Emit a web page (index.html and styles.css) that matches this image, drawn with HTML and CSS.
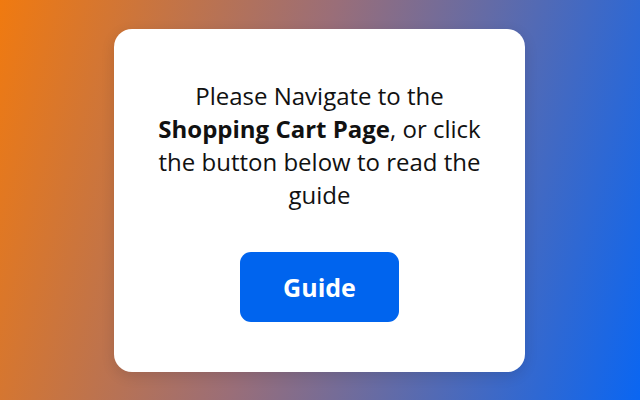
FILE: index.html
```html
<!DOCTYPE html>
<html>
<head>
<meta charset="utf-8">
<link rel="stylesheet" href="styles.css">
</head>
<body>
<main class="stage">
  <section class="card">
    <p class="message">Please Navigate to the <strong>Shopping Cart Page</strong>, or click the button below to read the guide</p>
    <button class="guide-btn" type="button">Guide</button>
  </section>
</main>
</body>
</html>
```
FILE: styles.css
```css
html, body {
  margin: 0;
  padding: 0;
  width: 640px;
  height: 400px;
  overflow: hidden;
}
body {
  font-family: "Open Sans", "Noto Sans", sans-serif;
  background: linear-gradient(105deg, #f07a10 0%, #9a6e78 45%, #0a66f2 100%);
}
.stage {
  width: 640px;
  height: 400px;
  display: flex;
  align-items: center;
  justify-content: center;
}
.card {
  box-sizing: border-box;
  width: 411px;
  height: 343px;
  margin-right: 1px;
  background: #ffffff;
  border-radius: 18px;
  padding: 50px 40px 0;
  display: flex;
  flex-direction: column;
  align-items: center;
  box-shadow: 0 4px 14px rgba(0, 0, 0, 0.12);
}
.message {
  margin: 0;
  font-size: 24px;
  line-height: 33px;
  color: #111111;
  text-align: center;
}
.message strong {
  font-weight: 700;
}
.guide-btn {
  margin-top: 41px;
  width: 159px;
  height: 70px;
  border: none;
  border-radius: 11px;
  background: #0064ee;
  color: #ffffff;
  font-family: "Open Sans", "Noto Sans", sans-serif;
  font-weight: 700;
  font-size: 25px;
}
```
